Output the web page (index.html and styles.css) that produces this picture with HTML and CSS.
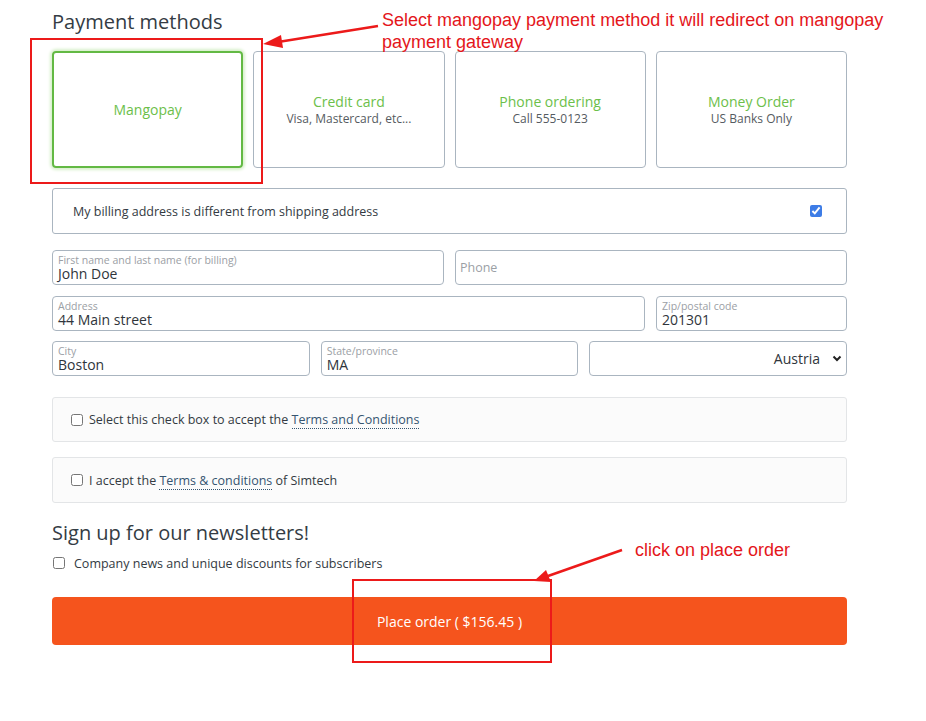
FILE: index.html
```html
<!DOCTYPE html>
<html lang="en">
<head>
    <meta charset="UTF-8">
    <meta name="viewport" content="width=device-width, initial-scale=1.0">
    <title>Checkout - Payment methods</title>
    <link rel="stylesheet" href="styles.css">
</head>
<body>

<div class="page">
    <h2 class="section-title">Payment methods</h2>

    <div class="methods">
        <div class="method selected">
            <div class="method-name">Mangopay</div>
        </div>
        <div class="method">
            <div class="method-name">Credit card</div>
            <div class="method-desc">Visa, Mastercard, etc...</div>
        </div>
        <div class="method">
            <div class="method-name">Phone ordering</div>
            <div class="method-desc">Call 555-0123</div>
        </div>
        <div class="method">
            <div class="method-name">Money Order</div>
            <div class="method-desc">US Banks Only</div>
        </div>
    </div>

    <label class="billing-toggle">
        <span>My billing address is different from shipping address</span>
        <input type="checkbox" checked>
    </label>

    <div class="fields">
        <div class="row row-2">
            <div class="field">
                <span class="field-label">First name and last name (for billing)</span>
                <span class="field-value">John Doe</span>
            </div>
            <div class="field empty">
                <span class="field-placeholder">Phone</span>
            </div>
        </div>
        <div class="row row-addr">
            <div class="field">
                <span class="field-label">Address</span>
                <span class="field-value">44 Main street</span>
            </div>
            <div class="field">
                <span class="field-label">Zip/postal code</span>
                <span class="field-value">201301</span>
            </div>
        </div>
        <div class="row row-3">
            <div class="field">
                <span class="field-label">City</span>
                <span class="field-value">Boston</span>
            </div>
            <div class="field">
                <span class="field-label">State/province</span>
                <span class="field-value">MA</span>
            </div>
            <div class="field select">
                <span class="select-value">Austria</span>
                <svg width="10" height="7" viewBox="0 0 10 7"><path d="M1.5 1.5 L5 5 L8.5 1.5" fill="none" stroke="#222" stroke-width="2"/></svg>
            </div>
        </div>
    </div>

    <label class="terms first">
        <input type="checkbox">
        <span>Select this check box to accept the <a class="terms-link">Terms and Conditions</a></span>
    </label>

    <label class="terms second">
        <input type="checkbox">
        <span>I accept the <a class="terms-link">Terms &amp; conditions</a> of Simtech</span>
    </label>

    <h2 class="section-title newsletter-title">Sign up for our newsletters!</h2>

    <label class="newsletter">
        <input type="checkbox">
        <span>Company news and unique discounts for subscribers</span>
    </label>

    <button class="place-order">Place order ( $156.45 )</button>
</div>

<!-- annotations drawn over the screenshot -->
<svg class="marks" width="926" height="721" viewBox="0 0 926 721">
    <rect x="31" y="39" width="231" height="144" fill="none" stroke="#ec1a1a" stroke-width="2"/>
    <line x1="378" y1="26" x2="278" y2="42" stroke="#ec1a1a" stroke-width="2.5"/>
    <polygon points="263,44 281,35 283,48" fill="#ec1a1a"/>
    <rect x="353" y="580" width="198" height="82" fill="none" stroke="#ec1a1a" stroke-width="2"/>
    <line x1="622" y1="550" x2="548" y2="576" stroke="#ec1a1a" stroke-width="2.5"/>
    <polygon points="534,581 546,570 551,582" fill="#ec1a1a"/>
</svg>
<div class="note note-top">Select mangopay payment method it will redirect on mangopay<br>payment gateway</div>
<div class="note note-bottom">click on place order</div>

</body>
</html>
```

FILE: styles.css
```css
body {
    margin: 0;
    font-family: "Open Sans", sans-serif;
    color: #333a42;
    background: #ffffff;
}
.page {
    width: 795px;
    margin-left: 52px;
    padding-top: 10px;
}
.section-title {
    font-size: 20px;
    font-weight: 400;
    line-height: 24px;
    margin: 0 0 17px;
    color: #343c44;
}
.methods {
    display: grid;
    grid-template-columns: repeat(4, 1fr);
    gap: 10px;
}
.method {
    height: 117px;
    box-sizing: border-box;
    border: 1px solid #aab5c0;
    border-radius: 4px;
    display: flex;
    flex-direction: column;
    align-items: center;
    justify-content: center;
}
.method.selected {
    border: 2px solid #63b944;
    box-shadow: 0 0 3px 2px #d8f0cc;
}
.method-name {
    color: #6cc04a;
    font-size: 14px;
    line-height: 19px;
}
.method-desc {
    color: #555b61;
    font-size: 12px;
    line-height: 16px;
}
.billing-toggle {
    margin-top: 20px;
    height: 46px;
    box-sizing: border-box;
    border: 1px solid #aab5c0;
    border-radius: 3px;
    display: flex;
    align-items: center;
    justify-content: space-between;
    padding: 0 24px 0 20px;
    font-size: 12.5px;
}
.billing-toggle input {
    width: 12px;
    height: 12px;
    margin: 0;
    accent-color: #3d7ce6;
}
.fields {
    margin-top: 16px;
    display: flex;
    flex-direction: column;
    gap: 11px;
}
.row {
    display: grid;
    gap: 11px;
}
.row-2 { grid-template-columns: 1fr 1fr; }
.row-addr { grid-template-columns: 593px 1fr; }
.row-3 {
    grid-template-columns: 1fr 1fr 1fr;
    margin-top: -1px;
}
.field {
    height: 35px;
    box-sizing: border-box;
    border: 1px solid #aab5c0;
    border-radius: 4px;
    padding: 3px 5px 0;
    display: flex;
    flex-direction: column;
}
.field-label {
    font-size: 10.5px;
    line-height: 12px;
    color: #9ba0a5;
}
.field-value {
    font-size: 14px;
    line-height: 16px;
    color: #2f353b;
}
.field.empty {
    justify-content: center;
    padding: 0 4px 1px;
}
.field-placeholder {
    font-size: 12.5px;
    color: #9ba0a5;
}
.field.select {
    flex-direction: row;
    align-items: center;
    justify-content: flex-end;
    gap: 12px;
    padding: 0 4px 0 0;
}
.select-value {
    font-size: 14px;
    color: #2f353b;
}
.terms {
    display: flex;
    align-items: center;
    height: 46px;
    box-sizing: border-box;
    padding-left: 18px;
    background: #fbfbfb;
    border: 1px solid #e3e5e7;
    border-radius: 3px;
    font-size: 12.5px;
}
.terms.first {
    margin-top: 21px;
    height: 45px;
}
.terms.second {
    margin-top: 15px;
}
.terms input,
.newsletter input {
    width: 12px;
    height: 12px;
    margin: 0 6px 0 0;
}
.terms-link {
    color: #355470;
    border-bottom: 1px dotted #355470;
}
.newsletter-title {
    margin: 18px 0 0;
}
.newsletter {
    display: flex;
    align-items: center;
    margin-top: 8px;
    height: 20px;
    font-size: 12.5px;
}
.newsletter input {
    margin: 0 9px 0 1px;
}
.place-order {
    display: block;
    width: 100%;
    height: 48px;
    margin-top: 24px;
    border: none;
    border-radius: 4px;
    background: #f5541d;
    color: #ffffff;
    font-family: "Open Sans", sans-serif;
    font-size: 14px;
    cursor: pointer;
}
.marks {
    position: absolute;
    left: 0;
    top: 0;
    pointer-events: none;
}
.note {
    position: absolute;
    font-family: "Liberation Sans", Arial, sans-serif;
    font-size: 18px;
    line-height: 22px;
    color: #e4161b;
}
.note-top {
    left: 382px;
    top: 9px;
}
.note-bottom {
    left: 635px;
    top: 539px;
}
```
